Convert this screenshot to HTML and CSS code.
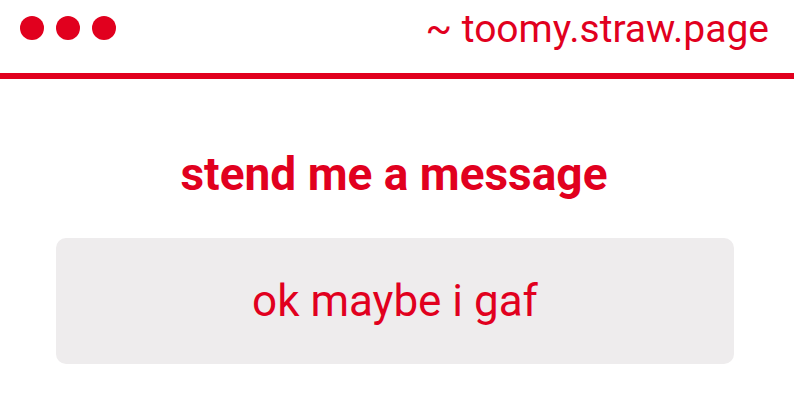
FILE: index.html
```html
<!DOCTYPE html>
<html>
<head>
<meta charset="utf-8">
<link rel="stylesheet" href="styles.css">
</head>
<body>
<header class="bar">
  <div class="dots"><span class="dot"></span><span class="dot"></span><span class="dot"></span></div>
  <div class="url">~ toomy.straw.page</div>
</header>
<main class="content">
  <h1 class="title">stend me a message</h1>
  <div class="card"><span class="card-text">ok maybe i gaf</span></div>
</main>
</body>
</html>
```
FILE: styles.css
```css
html, body {
  margin: 0;
  padding: 0;
  background: #ffffff;
}
body {
  font-family: Roboto, "Liberation Sans", sans-serif;
  color: #e1001e;
  width: 794px;
  height: 420px;
  overflow: hidden;
}
.bar {
  height: 73px;
  border-bottom: 6px solid #e1001e;
  display: flex;
  justify-content: space-between;
  align-items: flex-start;
  padding: 0 25px 0 20px;
}
.dots {
  display: flex;
  gap: 12px;
  margin-top: 16px;
}
.dot {
  width: 24px;
  height: 24px;
  border-radius: 50%;
  background: #e1001e;
}
.url {
  font-size: 39px;
  line-height: 38px;
  margin-top: 10px;
}
.content {
  display: flex;
  flex-direction: column;
  align-items: center;
  padding-right: 6px;
}
.title {
  margin: 70px 0 0 0;
  font-size: 46px;
  line-height: 50px;
  font-weight: 700;
}
.card {
  margin-top: 39px;
  margin-left: 2px;
  width: 678px;
  height: 126px;
  border-radius: 10px;
  background: #eeeced;
  display: flex;
  align-items: center;
  justify-content: center;
}
.card-text {
  font-size: 44px;
}
```
